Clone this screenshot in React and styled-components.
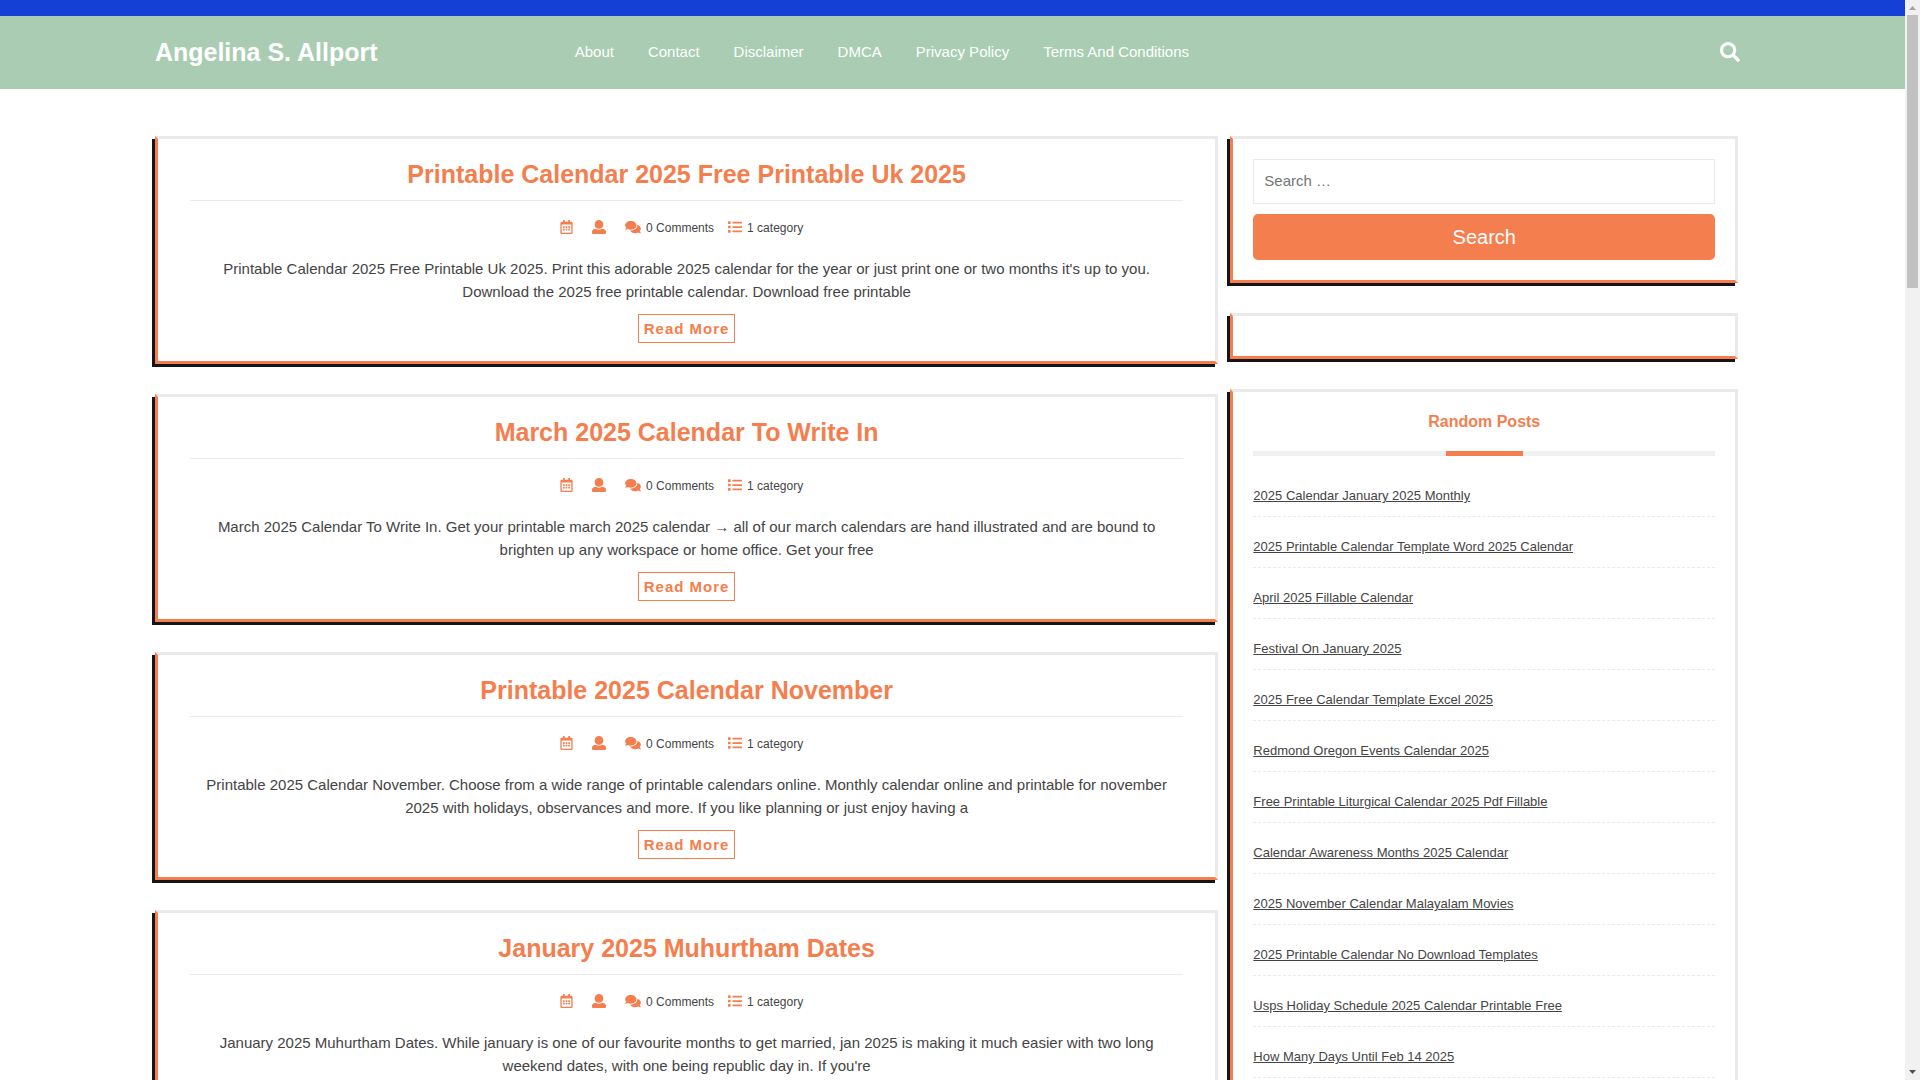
import styled, { createGlobalStyle } from "styled-components";
import {
  FaRegCalendarAlt,
  FaComments,
  FaList,
  FaSearch,
} from "react-icons/fa";

const GlobalStyles = createGlobalStyle`
  :root {
    --color-blue: #1440d5;
    --color-green: #a9ccb3;
    --color-orange: #f47e4d;
    --color-text: #444;
    --color-line: #eaeaea;
    --color-black: #151515;
  }

  * {
    box-sizing: border-box;
    margin: 0;
    padding: 0;
  }

  body {
    background-color: #fff;
    color: var(--color-text);
    font-family: "Liberation Sans", Arial, sans-serif;
    font-size: 15px;
    line-height: 22px;
  }
`;

const Window = styled.div`
  display: grid;
  grid-template-columns: minmax(0, 1fr) 15px;
  height: 100vh;
  overflow: hidden;
`;

const Page = styled.div`
  min-width: 0;
  height: 100vh;
  overflow: hidden;
`;

const Container = styled.div`
  width: 85%;
  margin: 0 auto;
  padding: 0 12px;
  display: flex;
`;

const TopBar = styled.div`
  height: 16px;
  background-color: var(--color-blue);
`;

const Header = styled.header`
  background-color: var(--color-green);
`;

const HeaderInner = styled(Container)`
  align-items: center;
  min-height: 73px;
  padding-bottom: 2px;
`;

const Logo = styled.p`
  flex: 0 0 25%;
  font-size: 25px;
  font-weight: 700;
  line-height: 30px;

  a {
    color: #fff;
    text-decoration: none;
  }
`;

const Menu = styled.ul`
  flex: 1;
  display: flex;
  gap: 34px;
  padding-left: 21px;
  list-style: none;

  a {
    color: #fff;
    text-decoration: none;
  }
`;

const SearchToggle = styled.button`
  display: flex;
  border: none;
  background: none;
  color: #fff;
  font-size: 20px;
  margin-right: 10px;
  cursor: pointer;
`;

const Content = styled(Container)`
  padding-top: 47px;
`;

const Posts = styled.main`
  flex: 0 0 calc(100% * 2 / 3);
`;

const Sidebar = styled.aside`
  flex: 1;
  min-width: 0;
  padding: 0 12px;
`;

const Box = styled.section`
  border: 3px solid var(--color-line);
  border-left-color: var(--color-orange);
  border-bottom-color: var(--color-orange);
  box-shadow: -3px 3px 0 var(--color-black);
  margin-bottom: 30px;
`;

const PostBox = styled(Box).attrs({ as: "article" })`
  padding: 18px 32px;
  text-align: center;
`;

const PostTitle = styled.h2`
  border-bottom: 1px solid var(--color-line);
  padding-bottom: 8px;
  font-size: 25px;
  line-height: 35px;

  a {
    color: var(--color-orange);
    text-decoration: none;
  }
`;

const Meta = styled.div`
  display: flex;
  justify-content: center;
  align-items: center;
  gap: 14px;
  margin: 16px 0 19px;
  padding-right: 10px;
  font-size: 12px;

  span {
    display: flex;
    align-items: center;
  }
`;

const MetaIcon = styled.svg`
  width: ${(props) => props.$width || 14}px;
  height: 14px;
  margin: 0 5px 2px 0;
  color: var(--color-orange);
`;

const Excerpt = styled.p`
  line-height: 1.5;
`;

const ReadMore = styled.a`
  display: inline-block;
  border: 1px solid var(--color-orange);
  padding: 3px 5px;
  margin-top: 11px;
  color: var(--color-orange);
  font-weight: 700;
  letter-spacing: 1px;
  line-height: 21px;
  text-decoration: none;
  vertical-align: top;
`;

const Widget = styled(Box)`
  padding: 20px;
`;

const SearchInput = styled.input`
  display: block;
  width: 100%;
  height: 45px;
  border: 1px solid var(--color-line);
  padding: 0 10px 2px;
  font: inherit;
`;

const SearchButton = styled.button`
  display: block;
  width: 100%;
  height: 46px;
  margin-top: 10px;
  border: none;
  border-radius: 5px;
  background-color: var(--color-orange);
  color: #fff;
  font-family: inherit;
  font-size: 20px;
  cursor: pointer;
`;

const WidgetTitle = styled.h3`
  color: var(--color-orange);
  font-size: 16px;
  line-height: 19px;
  text-align: center;

  &::after {
    content: "";
    display: block;
    height: 5px;
    margin-top: 20px;
    background: linear-gradient(var(--color-orange), var(--color-orange))
      center / 77px 100% no-repeat #f1f1f1;
  }
`;

const LinkList = styled.ul`
  list-style: none;
  margin-top: 10px;
  font-size: 13px;

  li {
    border-bottom: 1px dashed var(--color-line);
    padding: 19px 0 9px;
  }

  a {
    color: var(--color-text);
  }
`;

const Scrollbar = styled.div`
  display: flex;
  flex-direction: column;
  align-items: center;
  height: 100vh;
  padding: 6px 0;
  background-color: #f1f1f1;
`;

const Thumb = styled.div`
  width: 11px;
  height: 273px;
  margin: 5px 0 auto;
  background-color: #c1c1c1;
`;

const Arrow = styled.svg`
  display: block;
  width: 7px;
  height: 4px;
  fill: ${(props) => props.$color};
`;

const menu = [
  "About",
  "Contact",
  "Disclaimer",
  "DMCA",
  "Privacy Policy",
  "Terms And Conditions",
];

const posts = [
  {
    title: "Printable Calendar 2025 Free Printable Uk 2025",
    text: "Printable Calendar 2025 Free Printable Uk 2025. Print this adorable 2025 calendar for the year or just print one or two months it's up to you. Download the 2025 free printable calendar. Download free printable",
  },
  {
    title: "March 2025 Calendar To Write In",
    text: "March 2025 Calendar To Write In. Get your printable march 2025 calendar → all of our march calendars are hand illustrated and are bound to brighten up any workspace or home office. Get your free",
  },
  {
    title: "Printable 2025 Calendar November",
    text: "Printable 2025 Calendar November. Choose from a wide range of printable calendars online. Monthly calendar online and printable for november 2025 with holidays, observances and more. If you like planning or just enjoy having a",
  },
  {
    title: "January 2025 Muhurtham Dates",
    text: "January 2025 Muhurtham Dates. While january is one of our favourite months to get married, jan 2025 is making it much easier with two long weekend dates, with one being republic day in. If you're",
  },
];

const randomPosts = [
  "2025 Calendar January 2025 Monthly",
  "2025 Printable Calendar Template Word 2025 Calendar",
  "April 2025 Fillable Calendar",
  "Festival On January 2025",
  "2025 Free Calendar Template Excel 2025",
  "Redmond Oregon Events Calendar 2025",
  "Free Printable Liturgical Calendar 2025 Pdf Fillable",
  "Calendar Awareness Months 2025 Calendar",
  "2025 November Calendar Malayalam Movies",
  "2025 Printable Calendar No Download Templates",
  "Usps Holiday Schedule 2025 Calendar Printable Free",
  "How Many Days Until Feb 14 2025",
];

function Post({ title, text }) {
  return (
    <PostBox>
      <PostTitle>
        <a href="#post">{title}</a>
      </PostTitle>
      <Meta>
        <span>
          <MetaIcon as={FaRegCalendarAlt} $width={13} />
        </span>
        <span>
          {/* wider shoulders than FaUser */}
          <MetaIcon viewBox="0 0 512 512" fill="currentColor">
            <path d="M256 0c88.366 0 160 71.634 160 160s-71.634 160-160 160S96 248.366 96 160 167.634 0 256 0zm183.283 333.821l-71.313-17.828c-74.923 53.89-165.738 41.864-223.94 0l-71.313 17.828C29.981 344.505 0 382.903 0 426.955V464c0 26.51 21.49 48 48 48h416c26.51 0 48-21.49 48-48v-37.045c0-44.052-29.981-82.45-72.717-93.134z" />
          </MetaIcon>
        </span>
        <span>
          <MetaIcon as={FaComments} $width={16} />0 Comments
        </span>
        <span>
          <MetaIcon as={FaList} />1 category
        </span>
      </Meta>
      <Excerpt>{text}</Excerpt>
      <ReadMore href="#post">Read More</ReadMore>
    </PostBox>
  );
}

export default function App() {
  return (
    <>
      <GlobalStyles />
      <Window>
        <Page>
          <TopBar />
          <Header>
            <HeaderInner>
              <Logo>
                <a href="#home">Angelina S. Allport</a>
              </Logo>
              <Menu>
                {menu.map((item) => (
                  <li key={item}>
                    <a href="#page">{item}</a>
                  </li>
                ))}
              </Menu>
              <SearchToggle aria-label="Open search">
                <FaSearch />
              </SearchToggle>
            </HeaderInner>
          </Header>
          <Content>
            <Posts>
              {posts.map((post) => (
                <Post key={post.title} {...post} />
              ))}
            </Posts>
            <Sidebar>
              <Widget>
                <form>
                  <SearchInput
                    type="search"
                    placeholder="Search …"
                    aria-label="Search for"
                  />
                  <SearchButton type="button">Search</SearchButton>
                </form>
              </Widget>
              <Widget />
              <Widget>
                <WidgetTitle>Random Posts</WidgetTitle>
                <LinkList>
                  {randomPosts.map((item) => (
                    <li key={item}>
                      <a href="#post">{item}</a>
                    </li>
                  ))}
                </LinkList>
              </Widget>
            </Sidebar>
          </Content>
        </Page>
        <Scrollbar aria-hidden="true">
          <Arrow viewBox="0 0 7 4" $color="#a3a3a3">
            <path d="M0 4L3.5 0L7 4Z" />
          </Arrow>
          <Thumb />
          <Arrow viewBox="0 0 7 4" $color="#505050">
            <path d="M0 0L3.5 4L7 0Z" />
          </Arrow>
        </Scrollbar>
      </Window>
    </>
  );
}
